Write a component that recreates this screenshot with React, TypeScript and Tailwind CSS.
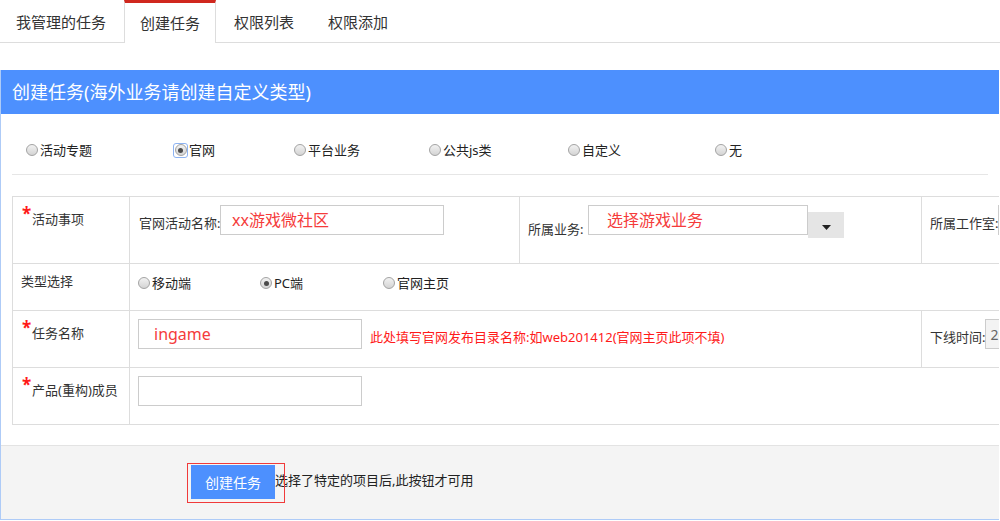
import type { ReactNode } from 'react';

const FONT = { fontFamily: '"Noto Sans", "Noto Sans CJK SC", sans-serif' };

const TABS = ['我管理的任务', '创建任务', '权限列表', '权限添加'];

const TASK_TYPES = [
  { label: '活动专题', width: 'w-[147px]' },
  { label: '官网', width: 'w-[121px]', checked: true, focus: true },
  { label: '平台业务', width: 'w-[135px]' },
  { label: '公共js类', width: 'w-[139px]' },
  { label: '自定义', width: 'w-[147px]' },
  { label: '无', width: 'w-[100px]' },
];

const PLATFORMS = [
  { label: '移动端', width: 'w-[122px]' },
  { label: 'PC端', width: 'w-[123px]', checked: true },
  { label: '官网主页', width: 'w-[120px]' },
];

function Radio({ checked, focus }: { checked?: boolean; focus?: boolean }) {
  const dot = (
    <span className="flex h-[12px] w-[12px] items-center justify-center rounded-full border border-[#a3a3a3] bg-gradient-to-b from-[#f2f2f2] to-[#d4d4d4]">
      {checked ? <span className="h-[5px] w-[5px] rounded-full bg-[#4a4a4a]" /> : null}
    </span>
  );
  if (focus) {
    return (
      <span className="mr-[1px] flex h-[15px] w-[15px] items-center justify-center rounded-[3px] border-[1.5px] border-[#8db3f2]">
        {dot}
      </span>
    );
  }
  return <span className="mr-[2px] flex">{dot}</span>;
}

function RadioItem({ label, width, checked, focus }: { label: string; width: string; checked?: boolean; focus?: boolean }) {
  return (
    <label className={`flex shrink-0 items-center ${width}`}>
      <Radio checked={checked} focus={focus} />
      <span className="text-[13px] leading-[16px] text-[#222]">{label}</span>
    </label>
  );
}

function RowLabel({ children, required }: { children: ReactNode; required?: boolean }) {
  if (!required) {
    return <div className="w-[117px] shrink-0 border-r border-[#ddd] pl-[8px] pt-[9px] text-[13px] leading-[16px] text-[#333]">{children}</div>;
  }
  return (
    <div className="flex w-[117px] shrink-0 border-r border-[#ddd] pl-[9px] pt-[8px]">
      <span className="w-[10px] text-[17px] font-bold leading-[18px] text-[#ff1a1a]">*</span>
      <span className="mt-[6px] text-[13px] leading-[16px] text-[#333]">{children}</span>
    </div>
  );
}

function TextBox({ value, pad = 'pl-[15px]' }: { value?: string; pad?: string }) {
  return (
    <div className={`flex h-[30px] w-[224px] shrink-0 items-center border border-[#ccc] bg-white text-[16px] text-[#f53b3b] ${pad}`}>
      {value}
    </div>
  );
}

export default function App() {
  return (
    <div className="h-[521px] w-[1000px] overflow-hidden bg-white" style={FONT}>
      {/* tabs */}
      <nav className="flex h-[43px] border-b border-[#ddd]">
        {TABS.map((tab, i) =>
          i === 1 ? (
            <div
              key={tab}
              className="-mb-px mr-[2px] flex h-[43px] items-center border-x border-t-[3px] border-x-[#ddd] border-t-[#d0281e] bg-white px-[15px] text-[15px] text-[#333]"
            >
              {tab}
            </div>
          ) : (
            <div key={tab} className="mr-[2px] flex h-[42px] items-center px-[16px] pt-[2px] text-[15px] text-[#333]">
              {tab}
            </div>
          ),
        )}
      </nav>

      <section className="mt-[27px] w-[999px] overflow-hidden border-l border-[#aecbf7]">
        <header className="flex h-[44px] items-center bg-[#4d90fe] pl-[11px] text-[18px] text-white">创建任务(海外业务请创建自定义类型)</header>

        <div className="mx-[11px] flex h-[61px] items-start border-b border-[#e6e6e6] pl-[14px] pt-[28px]">
          {TASK_TYPES.map((t) => (
            <RadioItem key={t.label} {...t} />
          ))}
        </div>

        {/* form table */}
        <div className="ml-[11px] mt-[21px] w-[1150px] border border-[#ddd]">
          <div className="flex h-[67px] border-b border-[#ddd]">
            <RowLabel required>活动事项</RowLabel>
            <div className="flex w-[390px] shrink-0 items-start border-r border-[#ddd] pl-[9px] pt-[8px]">
              <span className="mt-[10px] w-[81px] shrink-0 whitespace-nowrap text-[13px] leading-[16px] text-[#333]">官网活动名称:</span>
              <TextBox value="xx游戏微社区" pad="pl-[11px]" />
            </div>
            <div className="flex w-[402px] shrink-0 items-start border-r border-[#ddd] pl-[8px] pt-[8px]">
              <span className="mt-[16px] w-[60px] shrink-0 whitespace-nowrap text-[13px] leading-[16px] text-[#333]">所属业务:</span>
              <div className="flex h-[30px] w-[220px] shrink-0 items-center border border-[#ccc] pl-[18px] text-[16px] text-[#f53b3b]">选择游戏业务</div>
              <div className="mt-[7px] flex h-[26px] w-[36px] shrink-0 items-center justify-center bg-[#e5e5e5] pt-[4px]">
                <svg width="9" height="5" viewBox="0 0 9 5">
                  <path d="M0 0h9L4.5 5z" fill="#222" />
                </svg>
              </div>
            </div>
            <div className="flex flex-1 items-start pl-[8px] pt-[8px]">
              <span className="mt-[10px] shrink-0 whitespace-nowrap text-[13px] leading-[16px] text-[#333]">所属工作室:</span>
              <div className="h-[30px] w-[200px] shrink-0 border border-[#ccc]" />
            </div>
          </div>

          <div className="flex h-[47px] border-b border-[#ddd]">
            <RowLabel>类型选择</RowLabel>
            <div className="flex flex-1 items-start pl-[8px] pt-[11px]">
              {PLATFORMS.map((p) => (
                <RadioItem key={p.label} {...p} />
              ))}
            </div>
          </div>

          <div className="flex h-[57px] border-b border-[#ddd]">
            <RowLabel required>任务名称</RowLabel>
            <div className="flex w-[792px] shrink-0 items-start border-r border-[#ddd] pl-[8px] pt-[8px]">
              <TextBox value="ingame" />
              <span className="ml-[8px] mt-[10px] whitespace-nowrap text-[13px] leading-[16px] text-[#ff1a1a]">
                此处填写官网发布目录名称:如web201412(官网主页此项不填)
              </span>
            </div>
            <div className="flex flex-1 items-start pl-[8px] pt-[8px]">
              <span className="mt-[10px] shrink-0 whitespace-nowrap text-[13px] leading-[16px] text-[#333]">下线时间:</span>
              <div className="flex h-[30px] w-[200px] shrink-0 items-center border border-[#ccc] bg-[#f3f3f3] pl-[4px] text-[14px] text-[#666]">2015-01-01</div>
            </div>
          </div>

          <div className="flex h-[56px]">
            <RowLabel required>产品(重构)成员</RowLabel>
            <div className="flex flex-1 items-start pl-[8px] pt-[8px]">
              <TextBox />
            </div>
          </div>
        </div>

        {/* footer */}
        <footer className="mt-[20px] flex h-[75px] items-start border-y border-t-[#e3e3e3] border-b-[#aecbf7] bg-[#f4f4f4] pl-[190px] pt-[19px]">
          <div className="relative">
            <button type="button" className="flex h-[34px] w-[84px] items-center justify-center bg-[#4d90fe] text-[14px] text-white">
              创建任务
            </button>
            <span className="absolute left-[-4px] top-[-2px] h-[40px] w-[98px] border border-[#f03a3a]" />
          </div>
          <span className="mt-[7px] text-[13px] leading-[16px] text-[#222]">选择了特定的项目后,此按钮才可用</span>
        </footer>
      </section>
    </div>
  );
}
